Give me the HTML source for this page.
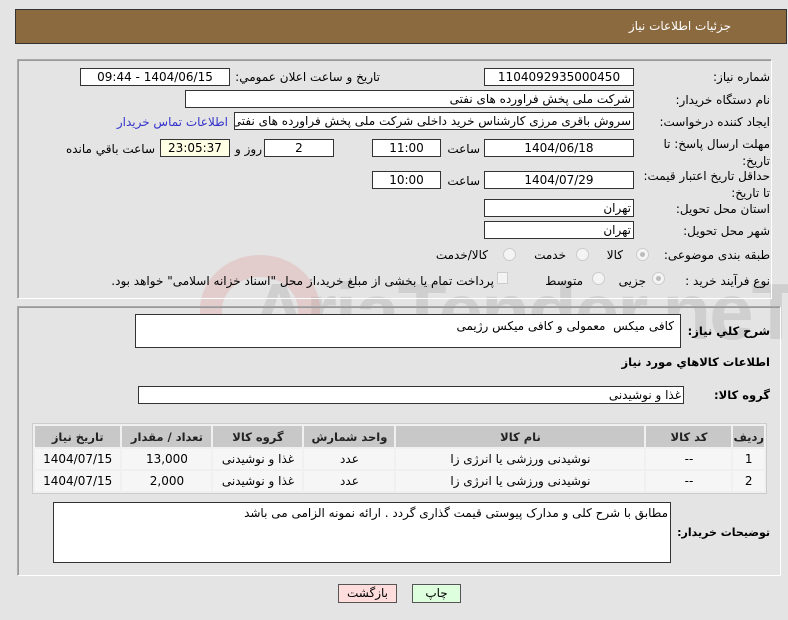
<!DOCTYPE html>
<html><head><meta charset="utf-8"><style>
*{box-sizing:border-box;margin:0;padding:0}
body{width:788px;height:620px;background:#e4e4e4;font-family:Tahoma,"DejaVu Sans","Noto Sans CJK SC",sans-serif;font-size:12px;color:#000;position:relative;overflow:hidden}
.a{position:absolute;white-space:nowrap}
.l{position:absolute;white-space:nowrap;direction:rtl;text-align:right}
.b{font-weight:bold;font-size:11.5px}
.i{position:absolute;background:#fff;border:1px solid #333;height:18px;line-height:16px;direction:rtl;text-align:center;font-size:12px;overflow:hidden;white-space:nowrap}
.ir{text-align:right;padding-right:2px}
.p{position:absolute;border:1px solid #aaa;border-right-color:#fff;border-bottom-color:#fff;box-shadow:1px 1px 0 #999 inset}
.r{position:absolute;width:13px;height:13px;border-radius:50%;border:1px solid #ccc;background:#f4f4f4}
.r.on::after{content:"";position:absolute;left:3px;top:3px;width:5px;height:5px;border-radius:50%;background:#bbb}
table{position:absolute;left:32px;top:423px;width:735px;border-collapse:separate;border-spacing:2px;background:#f0f0f0;border:1px solid #ccc;direction:rtl;font-size:12px}
th{background:#c8c8c8;height:21px;font-weight:bold;color:#222;font-size:11.5px}
td{background:#f6f6f6;height:20px;text-align:center}
.btn{position:absolute;height:19px;border:1px solid #555;text-align:center;line-height:17px;font-size:12px}
</style></head><body>
<div class="a" style="left:250px;top:262px;font-size:80px;font-weight:bold;color:rgba(160,160,160,0.3);font-family:'Liberation Sans',sans-serif;letter-spacing:-2px;line-height:100px">AriaTender.neT</div>
<div class="a" style="left:200px;top:255px;width:120px;height:110px;border:22px solid rgba(220,150,150,0.3);border-radius:50%;border-bottom-color:transparent"></div>

<div class="a" style="left:15px;top:9px;width:772px;height:35px;background:#8b6a40;border:1px solid #333"></div>
<div class="l" style="right:57px;top:19px;color:#fff;font-size:12px">جزئیات اطلاعات نیاز</div>

<div class="p" style="left:17px;top:59px;width:755px;height:240px"></div>
<div class="l" style="right:18px;top:70px">شماره نیاز:</div>
<div class="i" style="left:484px;top:68px;width:150px">1104092935000450</div>
<div class="l" style="right:408px;top:70px">تاریخ و ساعت اعلان عمومي:</div>
<div class="i" style="left:80px;top:68px;width:150px">1404/06/15 - 09:44</div>

<div class="l" style="right:18px;top:93px">نام دستگاه خریدار:</div>
<div class="i ir" style="left:185px;top:90px;width:449px">شرکت ملی پخش فراورده های نفتی</div>

<div class="l" style="right:18px;top:115px">ایجاد کننده درخواست:</div>
<div class="i ir" style="left:234px;top:112px;width:400px">سروش باقری مرزی کارشناس خرید داخلی شرکت ملی پخش فراورده های نفتی</div>
<div class="l" style="right:560px;top:115px;color:#3333cc">اطلاعات تماس خریدار</div>

<div class="l" style="right:18px;top:136px;line-height:17px">مهلت ارسال پاسخ: تا<br>تاریخ:</div>
<div class="i" style="left:484px;top:139px;width:150px">1404/06/18</div>
<div class="l" style="right:308px;top:142px">ساعت</div>
<div class="i" style="left:372px;top:139px;width:69px">11:00</div>
<div class="i" style="left:264px;top:139px;width:70px">2</div>
<div class="l" style="right:526px;top:142px">روز و</div>
<div class="i" style="left:160px;top:139px;width:70px;background:#ffffe6">23:05:37</div>
<div class="l" style="right:633px;top:142px">ساعت باقي مانده</div>

<div class="l" style="right:18px;top:168px;line-height:17px">حداقل تاریخ اعتبار قیمت:<br>تا تاریخ:</div>
<div class="i" style="left:484px;top:171px;width:150px">1404/07/29</div>
<div class="l" style="right:308px;top:174px">ساعت</div>
<div class="i" style="left:372px;top:171px;width:69px">10:00</div>

<div class="l" style="right:18px;top:202px">استان محل تحویل:</div>
<div class="i ir" style="left:484px;top:199px;width:150px">تهران</div>
<div class="l" style="right:18px;top:224px">شهر محل تحویل:</div>
<div class="i ir" style="left:484px;top:221px;width:150px">تهران</div>

<div class="l" style="right:18px;top:248px">طبقه بندی موضوعی:</div>
<div class="r on" style="left:636px;top:248px"></div><div class="l" style="right:165px;top:248px">کالا</div>
<div class="r" style="left:576px;top:248px"></div><div class="l" style="right:222px;top:248px">خدمت</div>
<div class="r" style="left:503px;top:248px"></div><div class="l" style="right:300px;top:248px">کالا/خدمت</div>

<div class="l" style="right:18px;top:274px">نوع فرآیند خرید :</div>
<div class="r on" style="left:652px;top:272px"></div><div class="l" style="right:142px;top:274px">جزیی</div>
<div class="r" style="left:592px;top:272px"></div><div class="l" style="right:205px;top:274px">متوسط</div>
<div class="a" style="left:497px;top:272px;width:11px;height:12px;border:1px solid #ccc;background:#f4f4f4"></div>
<div class="l" style="right:294px;top:274px">پرداخت تمام یا بخشی از مبلغ خرید،از محل "اسناد خزانه اسلامی" خواهد بود.</div>

<div class="p" style="left:17px;top:306px;width:764px;height:270px"></div>
<div class="l b" style="right:18px;top:324px">شرح كلي نياز:</div>
<div class="i ir" style="left:135px;top:314px;width:546px;height:34px;text-align:right;padding-right:6px;line-height:22px">كافی میكس &nbsp;معمولی و كافی میكس رژیمی</div>
<div class="l b" style="right:18px;top:355px">اطلاعات کالاهاي مورد نياز</div>
<div class="l b" style="right:18px;top:388px">گروه کالا:</div>
<div class="i ir" style="left:138px;top:386px;width:546px">غذا و نوشیدنی</div>

<table>
<tr><th style="width:26px">ردیف</th><th style="width:85px">کد کالا</th><th style="width:248px">نام کالا</th><th style="width:90px">واحد شمارش</th><th style="width:89px">گروه کالا</th><th style="width:89px">تعداد / مقدار</th><th>تاریخ نیاز</th></tr>
<tr><td>1</td><td>--</td><td>نوشیدنی ورزشی یا انرژی زا</td><td>عدد</td><td>غذا و نوشیدنی</td><td>13,000</td><td>1404/07/15</td></tr>
<tr><td>2</td><td>--</td><td>نوشیدنی ورزشی یا انرژی زا</td><td>عدد</td><td>غذا و نوشیدنی</td><td>2,000</td><td>1404/07/15</td></tr>
</table>

<div class="l b" style="right:18px;top:526px;font-size:11px">توضیحات خریدار:</div>
<div class="i ir" style="left:53px;top:502px;width:618px;height:61px;line-height:20px">مطابق با شرح کلی و مدارک پیوستی قیمت گذاری گردد . ارائه نمونه الزامی می باشد</div>

<div class="btn" style="left:338px;top:584px;width:59px;background:#fdd">بازگشت</div>
<div class="btn" style="left:412px;top:584px;width:49px;background:#dfd">چاپ</div>
</body></html>
